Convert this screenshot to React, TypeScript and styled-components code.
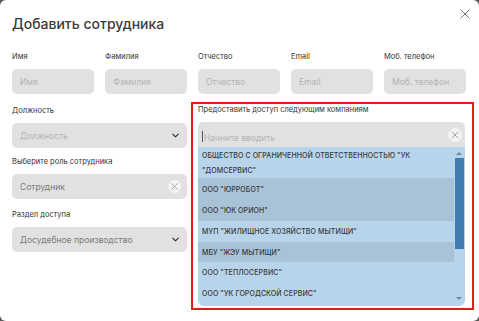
import React from 'react';
import styled, { createGlobalStyle } from 'styled-components';

const GlobalStyle = createGlobalStyle`
  html, body {
    margin: 0;
    padding: 0;
    background: #5a5a5a;
  }
  * {
    box-sizing: border-box;
  }
`;

const Modal = styled.div`
  width: 479px;
  height: 321px;
  background: #fff;
  border-radius: 6px;
  padding: 10px 13px 0 12px;
  font-family: Inter, 'Noto Sans', sans-serif;
  color: #333;
  overflow: hidden;
`;

const Header = styled.div`
  display: flex;
  justify-content: space-between;
  align-items: flex-start;
  height: 42px;
`;

const Title = styled.h2`
  margin: 5px 0 0 0;
  font-size: 14px;
  font-weight: 500;
  letter-spacing: 0;
  color: #3a3a3a;
`;

const CloseButton = styled.div`
  width: 12px;
  height: 12px;
  margin: -6px -5px 0 0;
  cursor: pointer;
`;

const TopRow = styled.div`
  display: grid;
  grid-template-columns: repeat(5, 82px);
  column-gap: 11px;
`;

const Field = styled.div<{ $gap?: number }>`
  display: flex;
  flex-direction: column;
  margin-bottom: ${(p) => p.$gap ?? 0}px;
`;

const Label = styled.div`
  font-size: 7.5px;
  line-height: 10px;
  height: 10px;
  color: #333;
  margin-bottom: 7px;
  white-space: nowrap;
`;

const InputBox = styled.div`
  height: 25px;
  background: #e1e1e1;
  border-radius: 5px;
  display: flex;
  align-items: center;
  justify-content: space-between;
  padding: 0 6px 0 8px;
`;

const Placeholder = styled.span<{ $dark?: boolean }>`
  font-size: 8.5px;
  color: ${(p) => (p.$dark ? '#7a7a7a' : '#b4b4b4')};
  white-space: nowrap;
`;

const Bottom = styled.div`
  display: grid;
  grid-template-columns: 175px 283px;
  column-gap: 4px;
  margin-top: 8px;
`;

const LeftCol = styled.div`
  display: flex;
  flex-direction: column;
  padding-top: 4px;
`;

const Highlight = styled.div`
  border: 2px solid #e31b1b;
  height: 208px;
  padding: 1px 7px 0 5px;
`;

const SearchBox = styled.div`
  height: 25px;
  background: #e1e1e1;
  border-radius: 5px 5px 0 0;
  display: flex;
  align-items: center;
  justify-content: space-between;
  padding: 0 3px 0 4px;
`;

const Caret = styled.span`
  display: inline-block;
  width: 1px;
  height: 11px;
  background: #555;
  margin-right: 1px;
  vertical-align: middle;
`;

const List = styled.div`
  position: relative;
  background: #b8d4ea;
  border-radius: 0 0 6px 6px;
  height: 159px;
  overflow: hidden;
  padding-right: 11px;
`;

const Item = styled.div<{ $active?: boolean; $h: number }>`
  height: ${(p) => p.$h}px;
  display: flex;
  align-items: center;
  padding: 0 8px 0 4px;
  background: ${(p) => (p.$active ? '#a8c2d7' : 'transparent')};
  font-size: 7px;
  line-height: 15px;
  font-weight: 500;
  color: #383838;
  letter-spacing: 0.1px;
`;

const Scrollbar = styled.div`
  position: absolute;
  top: 0;
  right: 1px;
  width: 10px;
  height: 100%;
  display: flex;
  flex-direction: column;
  align-items: center;
`;

const Arrow = styled.div<{ $down?: boolean }>`
  width: 0;
  height: 0;
  border-left: 3px solid transparent;
  border-right: 3px solid transparent;
  ${(p) => (p.$down ? 'border-top: 3px solid #6a8aa4;' : 'border-bottom: 3px solid #6a8aa4;')}
  margin: ${(p) => (p.$down ? 'auto 0 6px 0' : '5px 0 0 0')};
`;

const Thumb = styled.div`
  width: 9px;
  height: 91px;
  background: #3f7db3;
  margin-top: 3px;
`;

const Chevron = () => (
  <svg width="11" height="11" viewBox="0 0 24 24" fill="none" stroke="#333" strokeWidth="2.6" strokeLinecap="round" strokeLinejoin="round">
    <path d="M6 9l6 6 6-6" />
  </svg>
);

const ClearCircle = ({ size }: { size: number }) => (
  <svg width={size} height={size} viewBox="0 0 20 20">
    <circle cx="10" cy="10" r="10" fill="#f4f4f4" />
    <path d="M5.5 5.5l9 9M14.5 5.5l-9 9" stroke="#9a9a9a" strokeWidth="1.3" strokeLinecap="round" />
  </svg>
);

const companies = [
  { name: 'ОБЩЕСТВО С ОГРАНИЧЕННОЙ ОТВЕТСТВЕННОСТЬЮ "УК "ДОМСЕРВИС"', h: 31, active: false },
  { name: 'ООО "ЮРРОБОТ"', h: 22, active: true },
  { name: 'ООО "ЮК ОРИОН"', h: 21, active: true },
  { name: 'МУП "ЖИЛИЩНОЕ ХОЗЯЙСТВО МЫТИЩИ"', h: 21, active: false },
  { name: 'МБУ "ЖЭУ МЫТИЩИ"', h: 20, active: true },
  { name: 'ООО "ТЕПЛОСЕРВИС"', h: 21, active: false },
  { name: 'ООО "УК ГОРОДСКОЙ СЕРВИС"', h: 20, active: false },
];

const topFields = ['Имя', 'Фамилия', 'Отчество', 'Email', 'Моб. телефон'];

export default function App() {
  return (
    <>
      <GlobalStyle />
      <Modal>
        <Header>
          <Title>Добавить сотрудника</Title>
          <CloseButton>
            <svg width="12" height="12" viewBox="0 0 12 12">
              <path d="M1.5 1.5l9 9M10.5 1.5l-9 9" stroke="#777" strokeWidth="1" />
            </svg>
          </CloseButton>
        </Header>
        <TopRow>
          {topFields.map((f) => (
            <Field key={f}>
              <Label>{f}</Label>
              <InputBox>
                <Placeholder>{f}</Placeholder>
              </InputBox>
            </Field>
          ))}
        </TopRow>
        <Bottom>
          <LeftCol>
            <Field $gap={9}>
              <Label>Должность</Label>
              <InputBox>
                <Placeholder>Должность</Placeholder>
                <Chevron />
              </InputBox>
            </Field>
            <Field $gap={11}>
              <Label>Выберите роль сотрудника</Label>
              <InputBox>
                <Placeholder $dark>Сотрудник</Placeholder>
                <ClearCircle size={13} />
              </InputBox>
            </Field>
            <Field>
              <Label>Раздел доступа</Label>
              <InputBox>
                <Placeholder $dark>Досудебное производство</Placeholder>
                <Chevron />
              </InputBox>
            </Field>
          </LeftCol>
          <Highlight>
            <Label>Предоставить доступ следующим компаниям</Label>
            <SearchBox>
              <span>
                <Caret />
                <Placeholder>Начните вводить</Placeholder>
              </span>
              <ClearCircle size={14} />
            </SearchBox>
            <List>
              {companies.map((c) => (
                <Item key={c.name} $h={c.h} $active={c.active}>
                  {c.name}
                </Item>
              ))}
              <Scrollbar>
                <Arrow />
                <Thumb />
                <Arrow $down />
              </Scrollbar>
            </List>
          </Highlight>
        </Bottom>
      </Modal>
    </>
  );
}
